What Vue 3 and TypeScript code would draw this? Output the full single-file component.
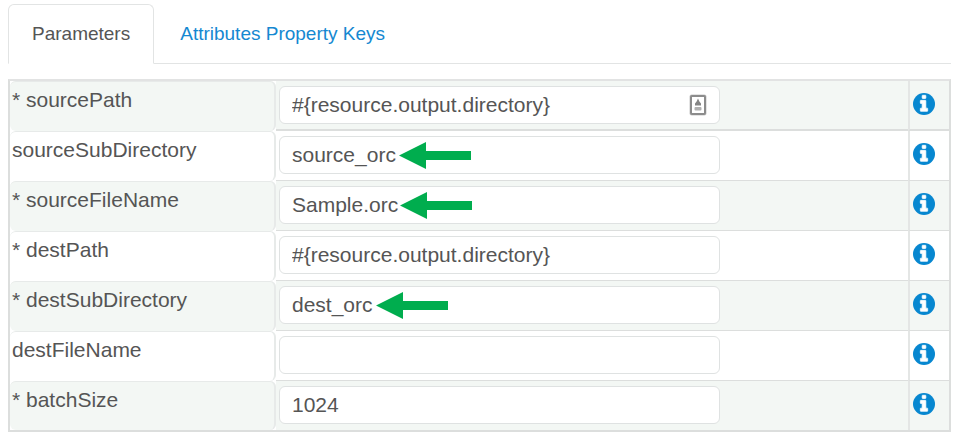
<script setup lang="ts">
import { ref } from 'vue'

interface Param {
  name: string
  required: boolean
  value: string
  picker?: boolean
  arrowAt?: number
}

const tabs = ['Parameters', 'Attributes Property Keys']
const active = ref(0)

const params = ref<Param[]>([
  { name: 'sourcePath', required: true, value: '#{resource.output.directory}', picker: true },
  { name: 'sourceSubDirectory', required: false, value: 'source_orc', arrowAt: 120 },
  { name: 'sourceFileName', required: true, value: 'Sample.orc', arrowAt: 121 },
  { name: 'destPath', required: true, value: '#{resource.output.directory}' },
  { name: 'destSubDirectory', required: true, value: 'dest_orc', arrowAt: 97 },
  { name: 'destFileName', required: false, value: '' },
  { name: 'batchSize', required: true, value: '1024' },
])
</script>

<template>
  <main class="panel">
    <nav class="tabs">
      <a
        v-for="(tab, i) in tabs"
        :key="tab"
        href="#"
        class="tab"
        :class="{ active: active === i }"
        @click.prevent="active = i"
      >{{ tab }}</a>
    </nav>
    <table class="params">
      <tbody>
        <tr v-for="p in params" :key="p.name">
          <th scope="row">
            <label :for="p.name">{{ p.required ? '* ' : '' }}{{ p.name }}</label>
          </th>
          <td class="value">
            <div class="field">
              <input :id="p.name" v-model="p.value" type="text" spellcheck="false" autocomplete="off" />
              <svg v-if="p.picker" class="picker" viewBox="0 0 18 22" aria-hidden="true">
                <rect x="0.5" y="0.5" width="17" height="21" rx="2" fill="#c9c9c9" />
                <rect x="2" y="2" width="14" height="18" rx="1" fill="#fff" stroke="#8c8c8c" stroke-width="2" />
                <path d="M9 4.5 L10.4 7.5 L12 9.5 V11.5 H6 V9.5 L7.6 7.5 Z" fill="#858585" />
                <rect x="5.5" y="13" width="7" height="3.5" rx="1" fill="#b0b0b0" />
              </svg>
              <svg
                v-if="p.arrowAt"
                class="arrow"
                :style="{ left: p.arrowAt + 'px' }"
                viewBox="0 0 72 27"
                aria-hidden="true"
              >
                <path d="M0 13.5 L27 0 V9 H72 V18 H27 V27 Z" fill="#00ad4e" />
              </svg>
            </div>
          </td>
          <td class="info">
            <button type="button" :aria-label="'About ' + p.name">
              <svg viewBox="0 0 1536 1536" aria-hidden="true">
                <circle cx="768" cy="768" r="768" fill="#0787d0" />
                <path
                  d="M1024 1248V1088q0-14-9-23t-23-9h-96V544q0-14-9-23t-23-9H544q-14 0-23 9t-9 23v160q0 14 9 23t23 9h96v320h-96q-14 0-23 9t-9 23v160q0 14 9 23t23 9h448q14 0 23-9t9-23zM896 352V192q0-14-9-23t-23-9H672q-14 0-23 9t-9 23v160q0 14 9 23t23 9h192q14 0 23-9t9-23z"
                  fill="#fff"
                  stroke="#fff"
                  stroke-width="50"
                />
              </svg>
            </button>
          </td>
        </tr>
      </tbody>
    </table>
  </main>
</template>

<style>
body {
  background: #fff;
}
</style>

<style scoped>
.panel {
  padding: 4px 8px 8px;
  font-family: "Liberation Sans", Arial, sans-serif;
  font-size: 21px;
  line-height: 24px;
  color: #555;
}

.tabs {
  display: flex;
  gap: 2px;
  border-bottom: 1px solid #e2e4e4;
  margin-bottom: 15px;
  font-size: 19px;
}

.tab {
  padding: 17px 23px;
  margin-bottom: -1px;
  border: 1px solid transparent;
  border-radius: 6px 6px 0 0;
  color: #1588d1;
  text-decoration: none;
}

.tab.active {
  color: #555;
  background: #fff;
  border-color: #e2e4e4;
  border-bottom-color: #fff;
}

.params {
  width: 100%;
  table-layout: fixed;
  border-collapse: separate;
  border-spacing: 0;
  border: 2px solid #dcdedd;
  border-top-color: #e2e3e3;
}

tr:nth-child(odd) {
  background: #f3f7f4;
}

th,
td {
  box-sizing: border-box;
  height: 50px;
  padding: 0;
  vertical-align: top;
}

tr:last-child th,
tr:last-child td {
  height: 49px;
}

th {
  width: 266px;
  padding: 6px 2px;
  border: 1px solid #e7eae9;
  border-width: 1px 2px 0 0;
  border-radius: 6px;
  font-weight: 400;
  text-align: left;
}

label {
  display: block;
}

td {
  border-bottom: 1px solid #dcdedd;
}

tr:first-child td {
  border-bottom-width: 2px;
}

tr:last-child td {
  border-bottom: 0;
}

.value {
  padding: 5px 0 0 3px;
}

.field {
  position: relative;
  width: 441px;
  max-width: 100%;
}

input {
  display: block;
  box-sizing: border-box;
  width: 100%;
  height: 38px;
  padding: 0 12px;
  border: 1px solid #dfe2e2;
  border-radius: 6px;
  background: #fff;
  color: #555;
  font: inherit;
}

.picker {
  position: absolute;
  top: 8px;
  right: 13px;
  width: 18px;
  height: 22px;
}

.arrow {
  position: absolute;
  top: 6px;
  width: 72px;
  height: 27px;
}

.info {
  width: 41px;
  padding: 12px 0 0 3px;
  border-left: 2px solid #e4e6e5;
}

button {
  display: block;
  width: 22px;
  height: 22px;
  padding: 0;
  border: 0;
  background: none;
  cursor: pointer;
}

button svg {
  display: block;
  width: 22px;
  height: 22px;
}
</style>
